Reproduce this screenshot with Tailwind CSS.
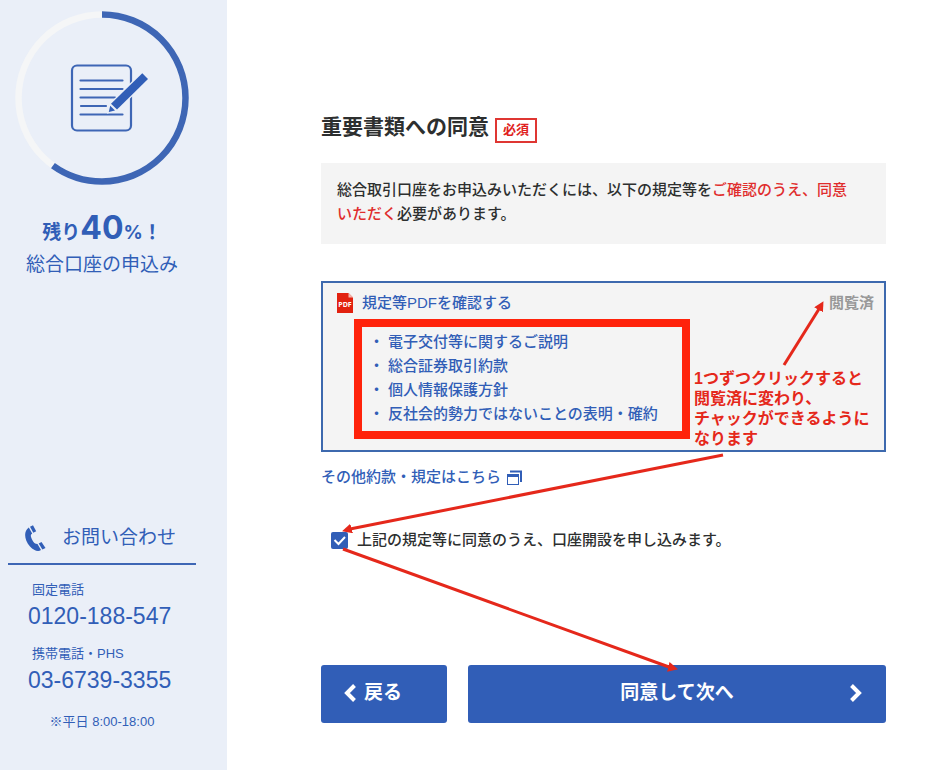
<!DOCTYPE html>
<html lang="ja">
<head>
  <meta charset="UTF-8" />
  <title>総合口座の申込み</title>
  <meta name="viewport" content="width=device-width, initial-scale=1.0">
  <script src="https://cdn.jsdelivr.net/npm/@tailwindcss/browser@4"></script>
</head>
<body class="bg-white text-[#2d2f2f] font-['Liberation_Sans','Noto_Sans_CJK_JP',sans-serif]">
  <div class="relative flex min-h-screen">

    <aside class="flex w-[227px] shrink-0 flex-col bg-[#eaeff8] pt-[10px] pr-[23px] pb-[38px] text-[#315eb7]">
      <svg class="mx-auto h-44 w-44" viewBox="0 0 176 176" fill="none">
        <circle cx="88" cy="88" r="83.5" stroke="#f5f6f7" stroke-width="6.5" />
        <circle cx="88" cy="88" r="83.5" stroke="#3e66b5" stroke-width="6.5" pathLength="100" stroke-dasharray="60 100" transform="rotate(-90 88 88)" />
        <rect x="58" y="55.5" width="59" height="65" rx="5" stroke="#3e66b5" stroke-width="2.2" />
        <path d="M66.500 70.500H108.500M66.500 79H108.500M66.500 87.500H101M67 96H92M66.500 104.500H108.500" stroke="#3e66b5" stroke-width="2.2" stroke-linecap="round" />
        <path d="M128.300 63.300L134 69L102.700 99.500L95 101.700L97 94Z" fill="#eaeff8" stroke="#eaeff8" stroke-width="3" />
        <path d="M128.300 63.300L134 69L103 99.500L97 93.800Z" fill="#315eb7" />
        <path d="M96.200 95.800L101 100.500L94.800 102Z" fill="#315eb7" />
      </svg>
      <p class="mt-[22px] text-center text-[19px] leading-10 font-bold">残り<span class="font-['Inter'] text-[32px]">40</span><span class="font-['Inter']">%</span>！</p>
      <p class="text-center text-[19px] leading-6">総合口座の申込み</p>

      <section class="mx-2 mt-auto">
        <h2 class="flex items-center gap-4 border-b-2 border-[#3e66b5] pb-[9px] pl-4 text-[19px] leading-8">
          <svg class="h-[28px] w-[22px]" viewBox="0 0 22 28" fill="#315eb7">
            <path d="M4.800 3.500C-.5 7 0 16 6 22.500C10 27 14.500 27.800 17 26L13.500 20C11 20 9.500 18.500 8 15.500C6.500 12.500 6.300 10.800 8.200 9.500Z" />
            <path d="M6 2.800L9 1.200L12.200 7.200L9.300 8.800Z" />
            <path d="M14.700 19.400L17.500 18L21.500 24L18.400 25.600Z" />
          </svg>
          お問い合わせ
        </h2>
        <dl class="mt-[15px]">
          <dt class="pl-6 text-[13px] leading-5">固定電話</dt>
          <dd class="pl-5 text-[23px] leading-8"><a href="tel:0120188547">0120-188-547</a></dd>
          <dt class="mt-3 pl-6 text-[13px] leading-5">携帯電話・PHS</dt>
          <dd class="pl-5 text-[23px] leading-8"><a href="tel:0367393355">03-6739-3355</a></dd>
        </dl>
        <p class="mt-4 text-center text-[13px] leading-5">※平日 8:00-18:00</p>
      </section>
    </aside>

    <main class="min-w-0 flex-1 pt-[111px] pr-[62px] pl-[94px] text-[15px] leading-6 font-medium">
      <div class="flex items-center gap-[6px]">
        <h1 class="text-[21px] leading-8 font-bold">重要書類への同意</h1>
        <span class="mt-[7px] border-2 border-[#df3632] px-[6px] pb-px text-[13px] leading-5 font-bold text-[#e02020]">必須</span>
      </div>

      <p class="mt-5 bg-[#f4f4f4] pt-[15px] pr-8 pb-[18px] pl-4">総合取引口座をお申込みいただくには、以下の規定等を<span class="text-[#e02d2d]">ご確認のうえ、同意いただく</span>必要があります。</p>

      <section class="relative mt-[37px] border-2 border-[#3d69ae] bg-[#f4f4f4] pt-2 pb-[11px] text-[#315eb7]">
        <div class="flex items-center pr-[10px] pl-[14px]">
          <svg class="mr-[9px] h-5 w-4" viewBox="0 0 16 20">
            <path d="M0 0H11.500L16 4.500V20H0Z" fill="#e2210f" />
            <path d="M11.500 0L16 4.500H11.500Z" fill="#f3b5ae" />
            <text x="8" y="14" font-size="7" font-weight="700" text-anchor="middle" fill="#fff" font-family="Open Sans">PDF</text>
          </svg>
          <h2>規定等PDFを確認する</h2>
          <span class="ml-auto font-bold text-[#999]">閲覧済</span>
        </div>
        <ul class="mt-1 ml-[31px] w-[336px] border-8 border-[#ff230b] pt-[3px] pb-[5px] pl-[7px]">
          <li class="flex gap-1"><span>・</span><a href="#">電子交付等に関するご説明</a></li>
          <li class="flex gap-1"><span>・</span><a href="#">総合証券取引約款</a></li>
          <li class="flex gap-1"><span>・</span><a href="#">個人情報保護方針</a></li>
          <li class="flex gap-1"><span>・</span><a href="#">反社会的勢力ではないことの表明・確約</a></li>
        </ul>
        <p class="absolute top-[86px] left-[371px] text-[16px] leading-5 font-bold whitespace-nowrap text-[#e5281b]">1つずつクリックすると<br>閲覧済に変わり、<br>チャックができるように<br>なります</p>
      </section>

      <a href="#" class="mt-[13px] flex items-center gap-[6px] text-[#315eb7]">
        その他約款・規定はこちら
        <svg class="h-[15px] w-[15px]" viewBox="0 0 15 15" fill="none" stroke="#315eb7">
          <path d="M3 1.500H14V12" stroke-width="2" />
          <rect x=".5" y="4.500" width="11" height="10" />
          <path d="M0 5.500H12" stroke-width="3" />
        </svg>
      </a>

      <label class="mt-[39px] flex items-center gap-[9px] pl-[10px]">
        <span class="relative flex">
          <input type="checkbox" checked class="h-[17px] w-[17px] appearance-none rounded-[2px] bg-[#315eb7]">
          <svg class="pointer-events-none absolute inset-0 h-[17px] w-[17px]" viewBox="0 0 17 17" fill="none">
            <path d="M3.500 8L7.500 12L14 5" stroke="#fff" stroke-width="2" />
          </svg>
        </span>
        上記の規定等に同意のうえ、口座開設を申し込みます。
      </label>

      <div class="mt-[113px] flex gap-[21px] text-[19px] font-bold text-white">
        <button type="button" class="flex h-[58px] w-[126px] items-center gap-2 rounded-[3px] bg-[#315eb7] pb-[2px] pl-[23px]">
          <svg class="h-[18px] w-3" viewBox="0 0 12 18" fill="none"><path d="M10.500 1.500L3 9L10.500 16.500" stroke="#fff" stroke-width="4" /></svg>
          戻る
        </button>
        <button type="button" class="relative h-[58px] flex-1 rounded-[3px] bg-[#315eb7] pb-[2px]">
          同意して次へ
          <svg class="absolute top-[19px] right-6 h-[18px] w-3" viewBox="0 0 12 18" fill="none"><path d="M1.500 1.500L9 9L1.500 16.500" stroke="#fff" stroke-width="4" /></svg>
        </button>
      </div>
    </main>

    <!-- guide arrows -->
    <svg class="pointer-events-none absolute top-0 left-0" width="948" height="770" fill="none" stroke="#e5281b" stroke-width="3">
      <defs>
        <marker id="head" markerUnits="userSpaceOnUse" markerWidth="10" markerHeight="10" refX="9" refY="5" orient="auto">
          <path d="M0 0L10 5L0 10Z" fill="#e5281b" stroke="none" />
        </marker>
      </defs>
      <path d="M784 365L819 309" />
      <path d="M819 309L823 302" stroke="none" marker-end="url(#head)" />
      <path d="M723 455L350 529" />
      <path d="M350 529L343 531" stroke="none" marker-end="url(#head)" />
      <path d="M343 549L669 667" />
      <path d="M669 667L677 669" stroke="none" marker-end="url(#head)" />
    </svg>
  </div>
</body>
</html>
